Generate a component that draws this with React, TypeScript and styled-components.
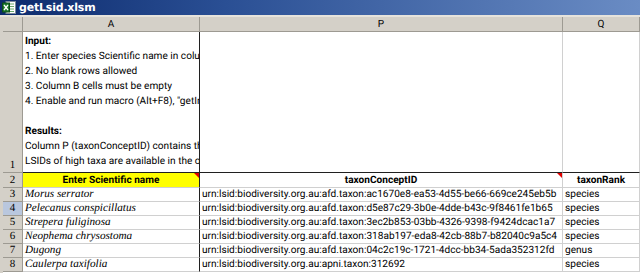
import React from "react"
import styled, { createGlobalStyle, css } from "styled-components"

const GlobalStyle = createGlobalStyle`
    html, body {
        margin: 0;
        padding: 0;
        background: #ffffff;
        overflow: hidden;
        text-rendering: geometricPrecision;
    }
`

const uiFont = `Roboto, "Noto Sans", "Liberation Sans", sans-serif`
const serifFont = `"Liberation Serif", "DejaVu Serif", serif`

const Window = styled.div`
    width: 640px;
    height: 273px;
    overflow: hidden;
    background: #d4d0c8;
    display: flex;
    flex-direction: column;
`

const TitleBar = styled.div`
    height: 15px;
    padding-left: 2px;
    display: flex;
    align-items: center;
    gap: 3px;
    background: linear-gradient(to right, #0c2a6c 0%, #2a4f94 35%, #6a8cc4 100%);
    border-bottom: 2px solid #e6e3dc;
`

const Title = styled.span`
    font-family: Tahoma, "DejaVu Sans", "Liberation Sans", sans-serif;
    font-weight: bold;
    font-size: 11px;
    color: #ffffff;
    letter-spacing: -0.2px;
`

const Sheet = styled.div`
    flex: 1;
    display: grid;
    grid-template-columns: 20px 177px 363px 1fr;
    grid-template-rows: 15px 141px 15px repeat(6, 14px);
    margin-left: 3px;
    background: #ffffff;
    font-family: ${uiFont};
    font-size: 10.1px;
    color: #000000;
`

const Header = styled.div<{ $active?: boolean, $row?: boolean }>`
    background: ${p => (p.$active ? "#b9c7de" : "#d4d0c8")};
    border-right: 1px solid #9d9a92;
    border-bottom: 1px solid #9d9a92;
    display: flex;
    justify-content: center;
    align-items: ${p => (p.$row ? "flex-end" : "center")};
    font-size: ${p => (p.$row ? "11px" : "10px")};
    font-family: ${p => (p.$row ? serifFont : uiFont)};
    line-height: 13px;
    overflow: hidden;
`

const Cell = styled.div<{ $frozenRight?: boolean, $frozenBottom?: boolean, $yellow?: boolean, $center?: boolean, $bold?: boolean, $italic?: boolean, $note?: boolean }>`
    position: relative;
    border-right: 1px solid ${p => (p.$frozenRight ? "#202020" : "#d0d0d0")};
    border-bottom: 1px solid ${p => (p.$frozenBottom ? "#202020" : "#d0d0d0")};
    background: ${p => (p.$yellow ? "#ffff00" : "#ffffff")};
    padding: 0 2px;
    white-space: nowrap;
    overflow: hidden;
    display: flex;
    align-items: flex-end;
    justify-content: ${p => (p.$center ? "center" : "flex-start")};
    line-height: 13px;
    font-weight: ${p => (p.$bold ? "bold" : "normal")};
    ${p => p.$italic && css`
        font-family: ${serifFont};
        font-style: italic;
        font-size: 11.2px;
    `}
    ${p => p.$note && css`
        &::after {
            content: "";
            position: absolute;
            top: 0;
            right: 0;
            border-top: 5px solid #e00000;
            border-left: 5px solid transparent;
        }
    `}
`

const Notes = styled.div`
    position: relative;
    border-right: 1px solid #202020;
    border-bottom: 1px solid #202020;
    padding: 2px 2px 0;
    white-space: nowrap;
    overflow: hidden;
    line-height: 15px;
`

const NoteLine = styled.div<{ $bold?: boolean }>`
    height: 15px;
    font-weight: ${p => (p.$bold ? "bold" : "normal")};
`

const ExcelIcon = () => (
    <svg width="14" height="13" viewBox="0 0 14 13">
        <rect x="4" y="0.5" width="9.5" height="12" fill="#ffffff" stroke="#7a8a9a" />
        <path d="M6 3h6M6 5.5h6M6 8h6M6 10.5h6" stroke="#6aa86a" strokeWidth="1" />
        <rect x="0.5" y="2" width="7" height="9" fill="#1e7a2e" stroke="#0c4e18" />
        <path d="M2 4l4 5M6 4l-4 5" stroke="#ffffff" strokeWidth="1.3" />
    </svg>
)

const notes: { text: string, bold?: boolean }[] = [
    { text: "Input:", bold: true },
    { text: "1. Enter species Scientific name in column A" },
    { text: "2. No blank rows allowed" },
    { text: "3. Column B cells must be empty" },
    { text: "4. Enable and run macro (Alt+F8), \"getInfo\"" },
    { text: "" },
    { text: "Results:", bold: true },
    { text: "Column P (taxonConceptID) contains the LSIDs" },
    { text: "LSIDs of high taxa are available in the other columns" },
]

const rows = [
    { name: "Morus serrator", id: "urn:lsid:biodiversity.org.au:afd.taxon:ac1670e8-ea53-4d55-be66-669ce245eb5b", rank: "species" },
    { name: "Pelecanus conspicillatus", id: "urn:lsid:biodiversity.org.au:afd.taxon:d5e87c29-3b0e-4dde-b43c-9f8461fe1b65", rank: "species" },
    { name: "Strepera fuliginosa", id: "urn:lsid:biodiversity.org.au:afd.taxon:3ec2b853-03bb-4326-9398-f9424dcac1a7", rank: "species" },
    { name: "Neophema chrysostoma", id: "urn:lsid:biodiversity.org.au:afd.taxon:318ab197-eda8-42cb-88b7-b82040c9a5c4", rank: "species" },
    { name: "Dugong", id: "urn:lsid:biodiversity.org.au:afd.taxon:04c2c19c-1721-4dcc-bb34-5ada352312fd", rank: "genus" },
    { name: "Caulerpa taxifolia", id: "urn:lsid:biodiversity.org.au:apni.taxon:312692", rank: "species" },
]

export default function App() {
    return (
        <Window>
            <GlobalStyle />
            <TitleBar>
                <ExcelIcon />
                <Title>getLsid.xlsm</Title>
            </TitleBar>
            <Sheet>
                <Header />
                <Header>A</Header>
                <Header>P</Header>
                <Header>Q</Header>

                <Header $row>1</Header>
                <Notes>
                    {notes.map((n, i) => (
                        <NoteLine key={i} $bold={n.bold}>{n.text}</NoteLine>
                    ))}
                </Notes>
                <Cell $frozenBottom />
                <Cell $frozenBottom />

                <Header $row>2</Header>
                <Cell $yellow $center $bold $frozenRight $note>Enter Scientific name</Cell>
                <Cell $center $bold $note>taxonConceptID</Cell>
                <Cell $center $bold>taxonRank</Cell>

                {rows.map((r, i) => (
                    <React.Fragment key={r.name}>
                        <Header $row $active={i === 1}>{i + 3}</Header>
                        <Cell $italic $frozenRight>{r.name}</Cell>
                        <Cell>{r.id}</Cell>
                        <Cell>{r.rank}</Cell>
                    </React.Fragment>
                ))}
            </Sheet>
        </Window>
    )
}
